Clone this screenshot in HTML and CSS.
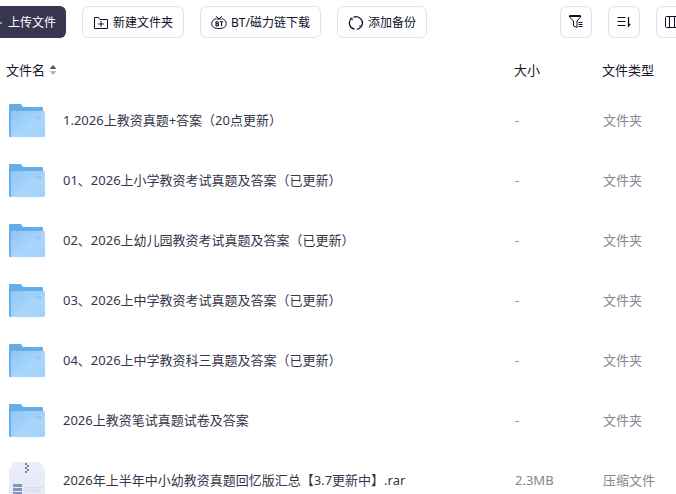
FILE: index.html
```html
<!DOCTYPE html>
<html lang="zh-CN">
<head>
<meta charset="utf-8">
<meta name="viewport" content="width=device-width, initial-scale=1">
<title>文件列表</title>
<link rel="stylesheet" href="styles.css">
</head>
<body>
<svg class="defs" aria-hidden="true">
  <defs>
    <linearGradient id="folder-front" x1="0" y1="0" x2="1" y2="1">
      <stop offset="0" stop-color="#8fc6f6"/>
      <stop offset="0.6" stop-color="#a9d6fc"/>
      <stop offset="1" stop-color="#a2d0fa"/>
    </linearGradient>
    <linearGradient id="folder-side" x1="0" y1="0" x2="0" y2="1">
      <stop offset="0" stop-color="#62ade8"/>
      <stop offset="1" stop-color="#6fb1e8"/>
    </linearGradient>
    <symbol id="folder" viewBox="0 -2 36 36">
      <path d="M0 1Q0 0 1 0H12L14 3H33Q34 3 34 4V32H0Z" fill="url(#folder-side)"/>
      <path d="M2 8Q2 7 3 7H35Q36 7 36 8V32Q36 33 35 33H2Z" fill="url(#folder-front)"/>
      <path d="M0 8V32Q0 33 1 33H2V8Z" fill="#69afe9"/>
      <path d="M27 12.500H33M28 14.500H33" stroke="#86bbea" stroke-width=".7"/>
    </symbol>
    <symbol id="archive" viewBox="0 0 36 38">
      <path d="M4 2.500Q4.500 1 6 1H30Q31.500 1 32 2.500L36 10V36Q36 38 34 38H2Q0 38 0 36V10Z" fill="#e6ebf8"/>
      <path d="M0 10L4 2.500Q4.500 1 6 1H30Q31.500 1 32 2.500L36 10Z" fill="#eceffa"/>
      <path d="M16 2h2v2h-2zM18 4h2v2h-2zM16 6h2v2h-2zM18 8h2v2h-2zM16 10h2v2h-2z" fill="#7480a8"/>
      <path d="M4 23H13V26H4ZM4 27H13V30H4ZM4 31H13V34H4Z" fill="#8794ba"/>
      <path d="M16 26.500H34M15 28.500H32M17 30.500H30" stroke="#d5dbed" stroke-width="1"/>
    </symbol>
  </defs>
</svg>

<header class="toolbar">
  <div class="group">
    <button class="btn btn-primary" type="button">
      <svg class="icon" viewBox="0 0 16 16" aria-hidden="true"><path d="M8 2V14M2 8H14"/></svg>上传文件
    </button>
    <button class="btn" type="button">
      <svg class="icon" viewBox="0 0 16 16" aria-hidden="true"><path d="M1.500 2.500H5.500L7 4.500H14.500V13.500H1.500ZM8 6.200V11.800M5.200 9H10.800"/></svg>新建文件夹
    </button>
    <button class="btn" type="button">
      <svg class="icon" viewBox="0 0 16 16" aria-hidden="true"><path d="M5 3.700C2.500 4.300 .7 6.200 .7 8.700C.7 12 3.500 13.500 8 13.500S15.300 12 15.300 8.700C15.300 6.200 13.500 4.300 11 3.700M4.800 1.300L8 3.800L11.200 1.300M5.500 4H10.500"/><path d="M5 6.500V11M5 6.700H6.300Q7.300 6.700 7.300 7.700T6.300 8.700H5H6.500Q7.600 8.700 7.600 9.800T6.500 10.900H5M8.700 6.800H12.300M10.500 6.800V11.300" stroke-width="1.100"/></svg>BT/磁力链下载
    </button>
    <button class="btn" type="button">
      <svg class="icon" viewBox="0 0 16 16" aria-hidden="true"><path d="M6.500 14.200A6.300 6.300 0 0 1 3.200 3.600M5.500 2.200A6.300 6.300 0 0 1 13.300 11.400M12.300 12.600A6.300 6.300 0 0 1 8.800 14.300" stroke-width="1.300"/><path d="M1.800 2.800H4.600V5.600ZM14.400 12.600H11.600V9.800Z" fill="currentColor" stroke="none"/></svg>添加备份
    </button>
  </div>
  <div class="group group-tools">
    <button class="btn btn-icon" type="button" aria-label="筛选">
      <svg class="icon" viewBox="0 0 16 16" aria-hidden="true"><path d="M1.500 1.500H12.500V3L9 7V13.500L5.500 12V7L1.500 3ZM1.500 2.500H12.500M10.500 8.500H14.500M10.500 10.500H14.500M10.500 12.500H14.500"/></svg>
    </button>
    <button class="btn btn-icon" type="button" aria-label="排序">
      <svg class="icon" viewBox="0 0 16 16" aria-hidden="true"><path d="M1.500 3.500H9.500M1.500 7.500H9.500M1.500 11.500H9.500"/><path d="M12.500 3V12L14.200 10" stroke-width="1.300"/></svg>
    </button>
    <button class="btn btn-icon" type="button" aria-label="列设置">
      <svg class="icon" viewBox="0 0 16 16" aria-hidden="true"><path d="M2.500 2.500H13.500Q14.500 2.500 14.500 3.500V12.500Q14.500 13.500 13.500 13.500H2.500Q1.500 13.500 1.500 12.500V3.500Q1.500 2.500 2.500 2.500ZM5.500 2.500V13.500M10.500 2.500V13.500"/></svg>
    </button>
  </div>
</header>

<table class="files">
  <thead>
    <tr>
      <th class="col-name" scope="col"><span class="sort">文件名<svg class="sort-icon" viewBox="0 0 6 10" aria-hidden="true"><path d="M0 4Q0 3 3 0Q6 3 6 4Z" fill="#55565e"/><path d="M0 6H6Q6 7 3 10Q0 7 0 6Z" fill="#b5b6ba"/></svg></span></th>
      <th class="col-size" scope="col">大小</th>
      <th class="col-type" scope="col">文件类型</th>
    </tr>
  </thead>
  <tbody>
    <tr><td><div class="file"><svg class="thumb" aria-hidden="true"><use href="#folder"/></svg><span>1.2026上教资真题+答案（20点更新）</span></div></td><td>-</td><td>文件夹</td></tr>
    <tr><td><div class="file"><svg class="thumb" aria-hidden="true"><use href="#folder"/></svg><span>01、2026上小学教资考试真题及答案（已更新）</span></div></td><td>-</td><td>文件夹</td></tr>
    <tr><td><div class="file"><svg class="thumb" aria-hidden="true"><use href="#folder"/></svg><span>02、2026上幼儿园教资考试真题及答案（已更新）</span></div></td><td>-</td><td>文件夹</td></tr>
    <tr><td><div class="file"><svg class="thumb" aria-hidden="true"><use href="#folder"/></svg><span>03、2026上中学教资考试真题及答案（已更新）</span></div></td><td>-</td><td>文件夹</td></tr>
    <tr><td><div class="file"><svg class="thumb" aria-hidden="true"><use href="#folder"/></svg><span>04、2026上中学教资科三真题及答案（已更新）</span></div></td><td>-</td><td>文件夹</td></tr>
    <tr><td><div class="file"><svg class="thumb" aria-hidden="true"><use href="#folder"/></svg><span>2026上教资笔试真题试卷及答案</span></div></td><td>-</td><td>文件夹</td></tr>
    <tr><td><div class="file"><svg class="thumb thumb-archive" aria-hidden="true"><use href="#archive"/></svg><span>2026年上半年中小幼教资真题回忆版汇总【3.7更新中】.rar</span></div></td><td>2.3MB</td><td>压缩文件</td></tr>
  </tbody>
</table>
</body>
</html>
```
FILE: styles.css
```css
* {
  box-sizing: border-box;
}

body {
  margin: 0;
  height: 100vh;
  overflow: hidden;
  background: #fff;
  color: #25263b;
  font-family: "Noto Sans", "Noto Sans CJK SC", sans-serif;
  font-size: 13px;
  line-height: 20px;
}

.defs {
  display: block;
  width: 0;
  height: 0;
}

.toolbar {
  display: flex;
  justify-content: space-between;
  margin: 0 -12px 0 -22px;
  padding: 6px 0 12px;
}

.group {
  display: flex;
  flex-shrink: 0;
  gap: 16px;
}

.btn {
  display: flex;
  align-items: center;
  justify-content: center;
  gap: 4px;
  height: 32px;
  padding: 1px 10px 0;
  border: 1px solid #e4e4e8;
  border-radius: 6px;
  background: #fff;
  color: #0f1029;
  font: inherit;
  font-size: 12px;
  white-space: nowrap;
}

.btn-primary {
  border: 0;
  background: #39374f;
  color: #fff;
}

.btn-icon {
  width: 32px;
  padding: 0;
}

.icon {
  flex: none;
  width: 16px;
  height: 16px;
  fill: none;
  stroke: currentColor;
}

.files {
  width: 100%;
  border-collapse: collapse;
  table-layout: fixed;
}

th,
td {
  padding: 0;
  text-align: left;
  white-space: nowrap;
}

th {
  height: 40px;
  color: #14152d;
  font-weight: 400;
}

td {
  height: 60px;
  padding-left: 1px;
  color: #85868f;
}

.col-name {
  padding-left: 6px;
}

.col-size {
  width: 88px;
}

.col-type {
  width: 74px;
}

.sort {
  display: flex;
  align-items: center;
  gap: 5px;
}

.sort-icon {
  width: 6px;
  height: 10px;
}

.file {
  display: flex;
  align-items: center;
  gap: 18px;
  padding-left: 8px;
  color: #35364a;
}

.thumb {
  flex: none;
  width: 36px;
  height: 36px;
}

.thumb-archive {
  height: 38px;
}
```
